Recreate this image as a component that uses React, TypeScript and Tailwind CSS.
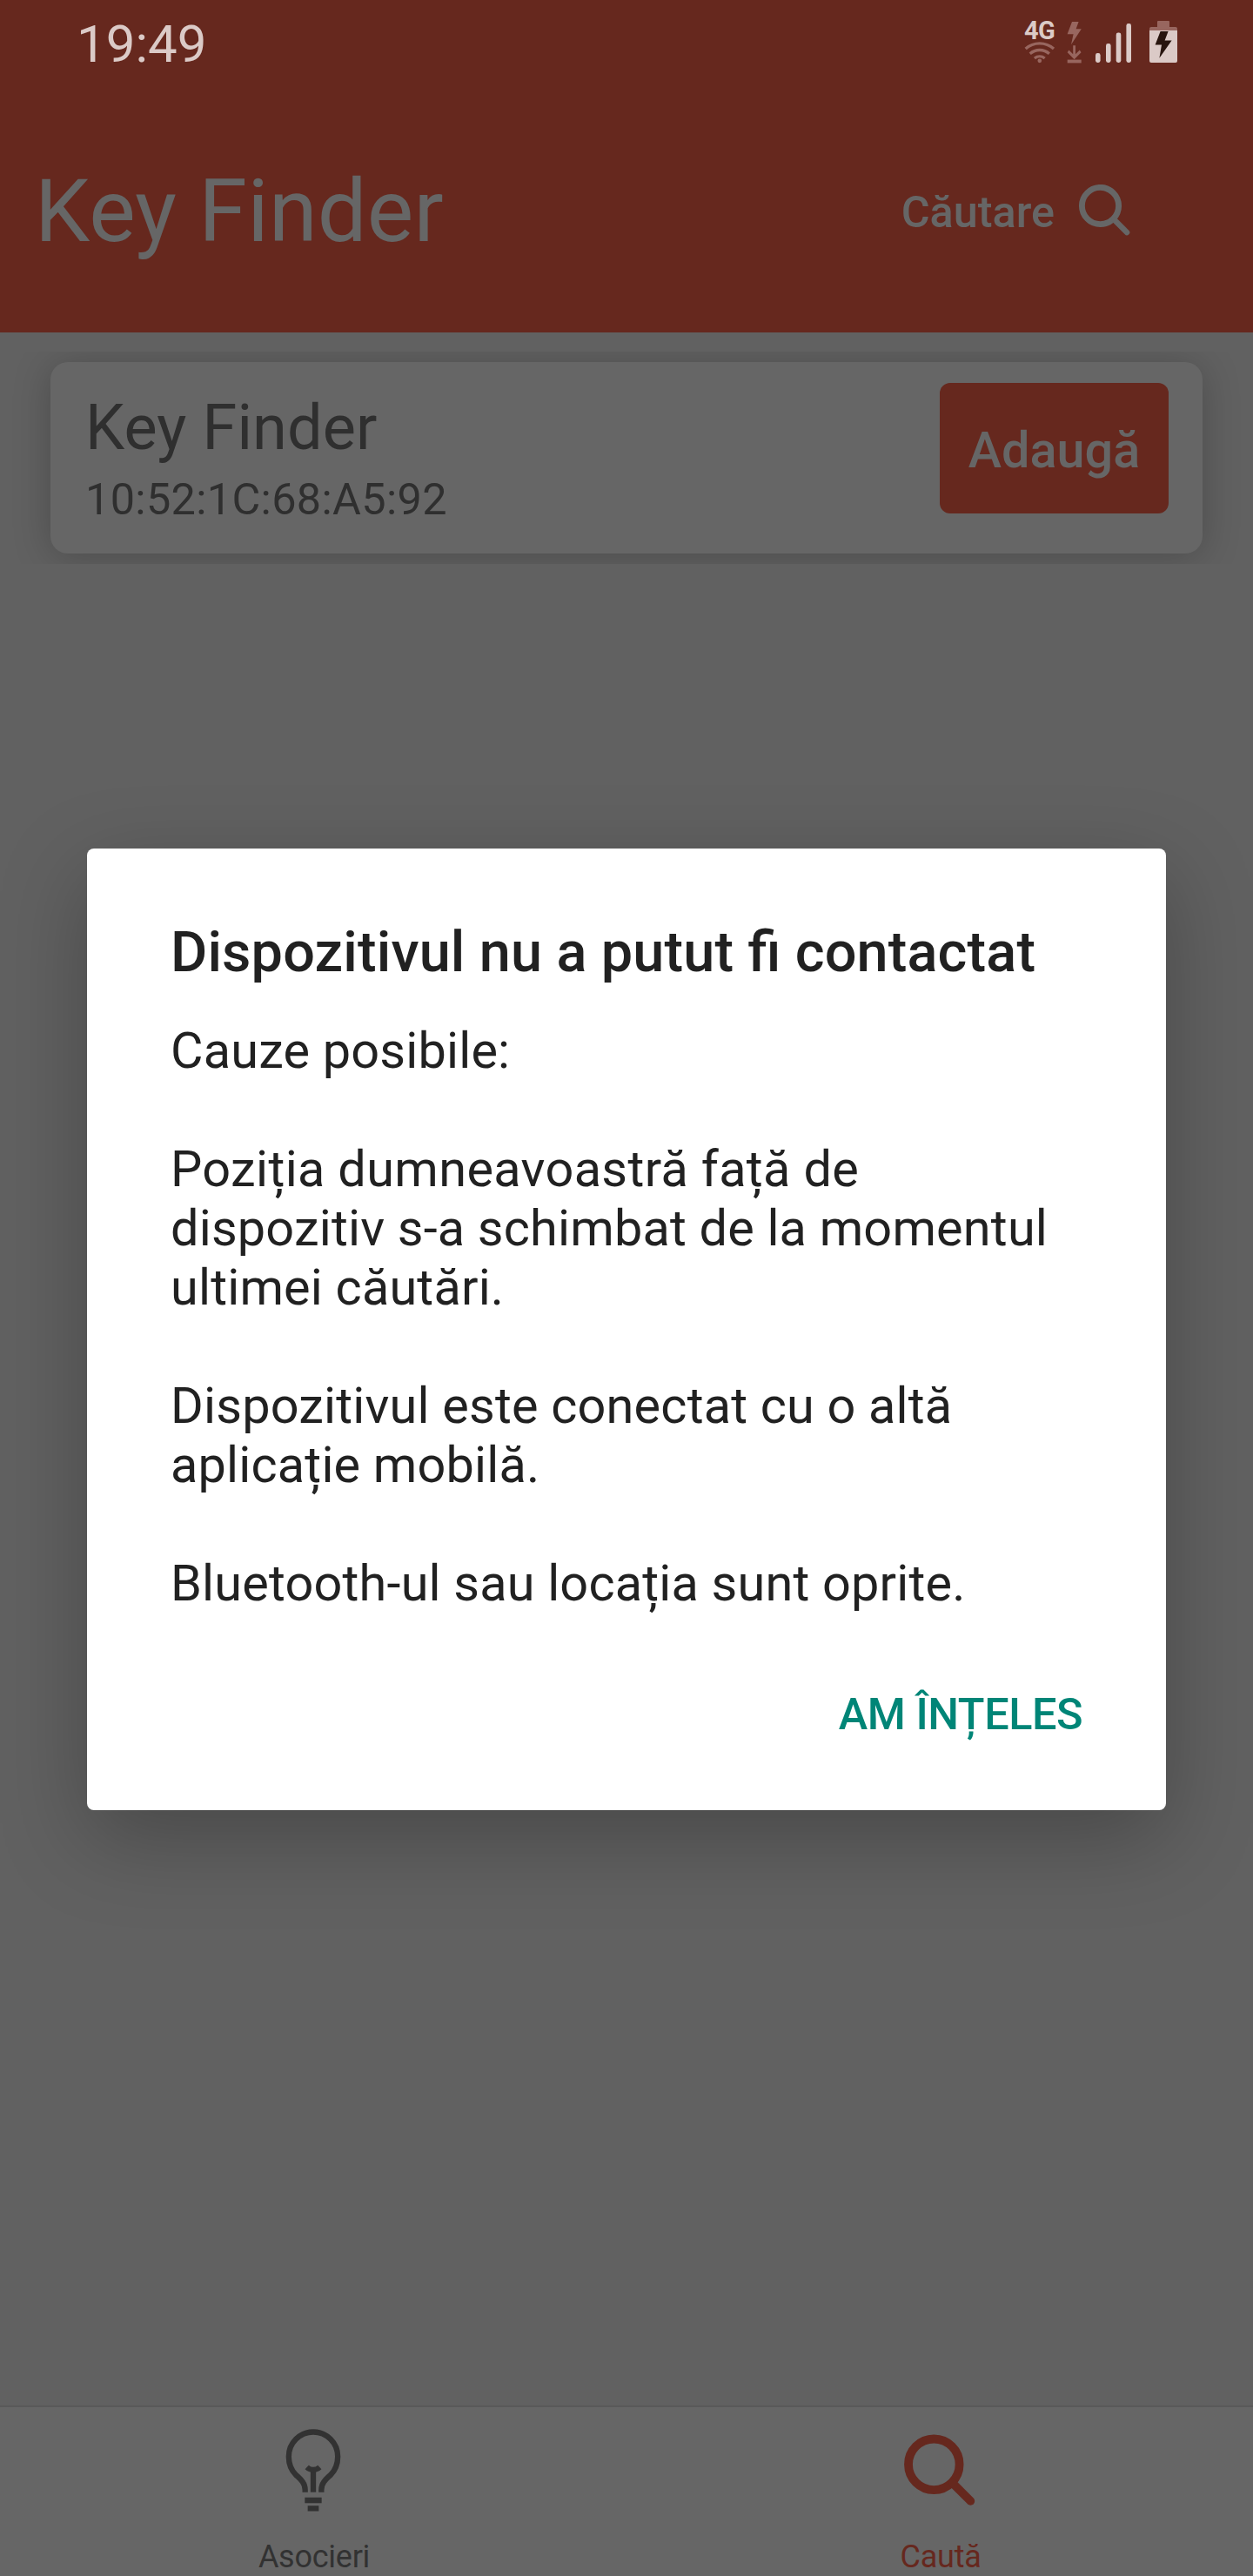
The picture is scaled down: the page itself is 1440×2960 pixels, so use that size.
import React from "react";

function NetworkIcon() {
  return (
    <div className="flex h-[50px] w-9 flex-col pt-px">
      <span className="h-6 text-[29px] leading-[22px] font-bold tracking-[-0.7px] text-[#dbcac7]">4G</span>
      <svg className="h-[26px] w-9" viewBox="0 0 36 26" fill="none" stroke="#98665f" strokeWidth="3.4">
        <path d="M1.3 8.2a25 25 0 0 1 33 0" />
        <path d="M6.5 14a17 17 0 0 1 22.6 0" />
        <path d="M11.8 19.4a9.5 9.5 0 0 1 12 0" />
        <circle cx="17.8" cy="22.3" r="2.4" fill="#98665f" stroke="none" />
      </svg>
    </div>
  );
}

function TransferIcon() {
  return (
    <svg className="h-[50px] w-[18px]" viewBox="0 0 18 50" fill="#98665f">
      <path d="M6 2h7.6l-3 8.3h6.2L5 28.3l2.6-12H.6z" />
      <path d="M7.2 29.3h2.8v10l4.8-4.8 1.7 2.8-7.9 8-7.9-8 1.7-2.8 4.8 4.8z" />
      <path d="M.7 45.6h16v3.8H.7z" />
    </svg>
  );
}

function SignalIcon() {
  return (
    <svg className="h-[50px] w-[42px]" viewBox="0 0 42 50" fill="#dbcac7">
      <rect x="0" y="38" width="5.6" height="11" rx="2.4" />
      <rect x="12" y="27" width="5.6" height="22" rx="2.4" />
      <rect x="23.7" y="14.5" width="5.6" height="34.5" rx="2.4" />
      <rect x="35.4" y="4" width="5.6" height="45" rx="2.4" />
    </svg>
  );
}

function BatteryIcon() {
  return (
    <svg className="h-[50px] w-8" viewBox="0 0 32 50">
      <path fill="#98665f" d="M10 1h12q1 0 1 1v6h7q2 0 2 2v2H0v-2q0-2 2-2h7V2q0-1 1-1z" />
      <path fill="#dbcac7" d="M0 12h32v35q0 2-2 2H2q-2 0-2-2z" />
      <path fill="#28150f" d="M12.6 13h9l-4 10.6h8L11.4 43.8l2.6-15.3H6.6z" />
    </svg>
  );
}

function BulbIcon() {
  return (
    <svg className="h-[104px] w-20" viewBox="240 138 240 312" fill="none" stroke="#323232" strokeWidth="19">
      <path d="M332 371v-8C332 337 313 324 300 311C284 295 275.5 273 275.5 248A84.5 84.5 0 0 1 444.5 248C444.5 273 436 295 420 311C407 324 388 337 388 363v8" />
      <path d="M360 371v-76" />
      <path d="M338 285Q348 294 360 294T382 285" />
      <path d="M331 399h58M341 427h38" />
    </svg>
  );
}

function Tab({ label, tone, children }: { label: string; tone: string; children: React.ReactNode }) {
  return (
    <div className={"flex flex-1 flex-col items-center " + tone}>
      <div className="flex h-[150px] items-start pt-5">{children}</div>
      <span className="pl-[2px] text-[36px] leading-[44px] tracking-[-0.25px]">{label}</span>
    </div>
  );
}

export default function App() {
  return (
    <div className="relative flex h-[2960px] w-[1440px] flex-col overflow-hidden bg-[#616161] font-['Roboto',sans-serif]">
      <header className="h-[382px] bg-[#66281e]">
        <div className="flex h-[101px] items-start justify-between pr-[87px] pl-[88px]">
          <span className="text-[60px] leading-[101px] text-[#dbcac7]">19:49</span>
          <div className="flex items-start pt-[23px]">
            <NetworkIcon />
            <div className="ml-[13px] flex"><TransferIcon /></div>
            <div className="ml-[15px] flex"><SignalIcon /></div>
            <div className="ml-5 flex"><BatteryIcon /></div>
          </div>
        </div>
        <div className="flex h-[283px] items-center justify-between pr-[140px] pl-[40px] text-[#666666]">
          <h1 className="text-[100.8px] leading-[120px] tracking-[0.2px]">Key Finder</h1>
          <div className="flex items-center">
            <span className="pt-[3px] text-[50.4px] leading-[60px] font-medium">Căutare</span>
            <svg className="ml-[26px] h-[62px] w-[62px]" viewBox="0 0 62 62" fill="none" stroke="currentColor">
              <circle cx="26.5" cy="24.5" r="21.1" strokeWidth="6.9" />
              <path d="M42.5 40.5L57 55" strokeWidth="6.6" strokeLinecap="round" />
            </svg>
          </div>
        </div>
      </header>

      <main className="flex-1 pt-[22px]">
        <div className="h-[244px] overflow-hidden px-[58px] py-3">
          <div className="flex h-[220px] items-start justify-between rounded-[20px] bg-[#666666] pr-[39px] pl-[40px] shadow-[0_4px_44px_rgba(0,0,0,0.22)]">
            <div className="flex flex-col pt-[34px] text-[#2f2f2f]">
              <span className="text-[72px] leading-[84px] tracking-[0.15px]">Key Finder</span>
              <span className="mt-[10px] text-[50.4px] leading-[60px] tracking-[0.35px]">10:52:1C:68:A5:92</span>
            </div>
            <button className="mt-6 h-[150px] w-[263px] rounded-[12px] bg-[#66281e] pt-[6px] text-[57.6px] leading-[68px] font-medium text-[#666666]">
              Adaugă
            </button>
          </div>
        </div>
      </main>

      <nav className="flex h-[196px] border-t-2 border-[#595959] bg-[#666666]">
        <Tab label="Asocieri" tone="text-[#323232]">
          <BulbIcon />
        </Tab>
        <Tab label="Caută" tone="text-[#66281e]">
          <svg className="mt-[11px] h-[84px] w-[84px]" viewBox="0 0 84 84" fill="none" stroke="currentColor">
            <circle cx="35.3" cy="34.8" r="29.3" strokeWidth="9.8" />
            <path d="M57 56.5L77.4 76.9" strokeWidth="9.6" strokeLinecap="round" />
          </svg>
        </Tab>
      </nav>

      <div className="absolute inset-0 flex items-start justify-center pt-[975px]">
        <div role="dialog" className="flex h-[1105px] w-[1240px] flex-col rounded-[8px] bg-white px-[96px] pt-[81px] text-[#212121] shadow-[0_32px_100px_rgba(0,0,0,0.26)]">
          <h2 className="text-[64.8px] leading-[76px] font-medium tracking-[0.15px] [font-feature-settings:'liga'_1]">Dispozitivul nu a putut fi contactat</h2>
          <div className="mt-[42px] flex flex-col gap-[68px] text-[57.6px] leading-[68px] tracking-[0.2px] whitespace-nowrap">
            <p>Cauze posibile:</p>
            <p><span className="tracking-[0.37px]">Poziția dumneavoastră față de</span><br />dispozitiv s-a schimbat de la momentul<br />ultimei căutări.</p>
            <p>Dispozitivul este conectat cu o altă<br />aplicație mobilă.</p>
            <p>Bluetooth-ul sau locația sunt oprite.</p>
          </div>
          <button className="mt-[86px] self-end text-[50.4px] leading-[60px] font-medium tracking-[-0.45px] text-[#008577]">AM ÎNȚELES</button>
        </div>
      </div>
    </div>
  );
}
